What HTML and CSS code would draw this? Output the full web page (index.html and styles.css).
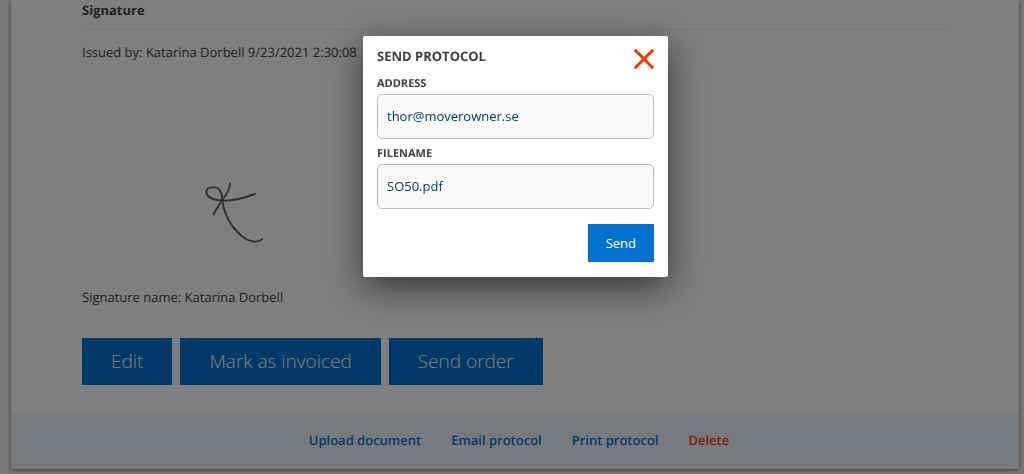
FILE: index.html
```html
<!DOCTYPE html>
<html lang="en">
<head>
<meta charset="utf-8">
<meta name="viewport" content="width=device-width, initial-scale=1">
<title>Send protocol</title>
<link rel="stylesheet" href="styles.css">
</head>
<body>
<main class="sheet">
  <section class="content">
    <h2 class="section-title">Signature</h2>
    <p class="text">Issued by: Katarina Dorbell 9/23/2021 2:30:08</p>
    <svg class="signature" viewBox="0 0 90 85" role="img" aria-label="Signature of Katarina Dorbell">
      <path d="M40 13.500C40 19 37 24 32 30.500C28.500 35 26 40 23.500 44.500M32 30.500C32.500 25 30.500 17.500 24 17.200C18 17 16 19.500 16.500 23C17.500 28 25 30 32 30.500C43 31.500 54 28 65 24M32 30.500C34 41 37 49 43 57C49 64 55 70.500 63 71.500C67.500 72 70.500 71 72 69"/>
    </svg>
    <p class="text">Signature name: Katarina Dorbell</p>
    <div class="actions">
      <button class="action" type="button">Edit</button>
      <button class="action" type="button">Mark as invoiced</button>
      <button class="action" type="button">Send order</button>
    </div>
  </section>
  <footer class="links">
    <a class="link" href="#upload">Upload document</a>
    <a class="link" href="#email">Email protocol</a>
    <a class="link" href="#print">Print protocol</a>
    <a class="link danger" href="#delete">Delete</a>
  </footer>
</main>
<div class="overlay">
  <form class="dialog" role="dialog" aria-modal="true" aria-labelledby="dialog-title">
    <header class="dialog-head">
      <h1 class="dialog-title" id="dialog-title">SEND PROTOCOL</h1>
      <button class="close" type="button" aria-label="Close">
        <svg class="close-icon" viewBox="0 0 22 22" aria-hidden="true"><path d="M1.800 1.800 20.200 20.200M20.200 1.800 1.800 20.200"/></svg>
      </button>
    </header>
    <label class="label" for="address">ADDRESS</label>
    <input class="field" id="address" type="text" value="thor@moverowner.se">
    <label class="label" for="filename">FILENAME</label>
    <input class="field" id="filename" type="text" value="SO50.pdf">
    <button class="send" type="button">Send</button>
  </form>
</div>
</body>
</html>
```
FILE: styles.css
```css
* {
  box-sizing: border-box;
}

body {
  margin: 0;
  padding: 0 5px 5px 11px;
  background: #f0f0f0;
  color: #404040;
  font-family: "Open Sans", "Noto Sans", sans-serif;
  font-size: 13px;
  line-height: 20px;
  text-rendering: geometricPrecision;
}

.sheet {
  background: #fff;
  box-shadow: 0 1px 4px rgba(0, 0, 0, 0.5);
}

.content {
  display: flex;
  flex-direction: column;
  padding: 0 71px 27px;
}

.section-title {
  margin: 0 0 12px;
  padding-bottom: 9px;
  border-bottom: 1px solid #f0f0f0;
  font-size: 13px;
  font-weight: 700;
}

.text {
  margin: 0;
}

.signature {
  width: 90px;
  height: 85px;
  margin: 108px 0 32px 108px;
  fill: none;
  stroke: #666;
  stroke-width: 2;
  stroke-linecap: round;
  stroke-linejoin: round;
}

.actions {
  display: flex;
  gap: 8px;
  margin-top: 31px;
}

.action {
  height: 47px;
  padding: 0 29px 2px;
  border: 0;
  background: #0072ce;
  color: #fff;
  font: 300 19px/28px "Open Sans", "Noto Sans", sans-serif;
}

.links {
  display: flex;
  justify-content: center;
  gap: 30px;
  padding: 18px 0 19px 8px;
  background: #eef6fc;
}

.link {
  color: #0072ce;
  font-weight: 600;
  text-decoration: none;
}

.danger {
  color: #f03a10;
}

.overlay {
  position: fixed;
  inset: 0;
  display: flex;
  justify-content: center;
  align-items: flex-start;
  padding: 36px 0 0 7px;
  background: rgba(0, 0, 0, 0.5);
}

.dialog {
  display: flex;
  flex-direction: column;
  width: 305px;
  padding: 11px 14px 15px;
  border-radius: 2px;
  background: #fff;
  box-shadow: 0 10px 36px rgba(0, 0, 0, 0.6);
}

.dialog-head {
  display: flex;
  justify-content: space-between;
  height: 26px;
}

.dialog-title {
  margin: 0;
  font-size: 13px;
  font-weight: 700;
  line-height: 18px;
}

.close {
  width: 22px;
  height: 26px;
  margin-right: -1px;
  padding: 1px 0 3px;
  border: 0;
  background: none;
}

.close-icon {
  display: block;
  width: 22px;
  height: 22px;
  fill: none;
  stroke: #f03a00;
  stroke-width: 3;
}

.label {
  height: 21px;
  font-size: 11px;
  font-weight: 700;
  line-height: 22px;
}

.field {
  width: 100%;
  height: 45px;
  margin-bottom: 4px;
  padding: 0 9px 1px;
  border: 1px solid #bbb;
  border-radius: 5px;
  background: #f9f9f9;
  color: #003d70;
  font: 400 13px/20px "Open Sans", "Noto Sans", sans-serif;
}

.send {
  align-self: flex-end;
  height: 38px;
  margin-top: 11px;
  padding: 0 18px;
  border: 0;
  background: #0072ce;
  color: #fff;
  font: 500 13px/20px "Open Sans", "Noto Sans", sans-serif;
}
```
